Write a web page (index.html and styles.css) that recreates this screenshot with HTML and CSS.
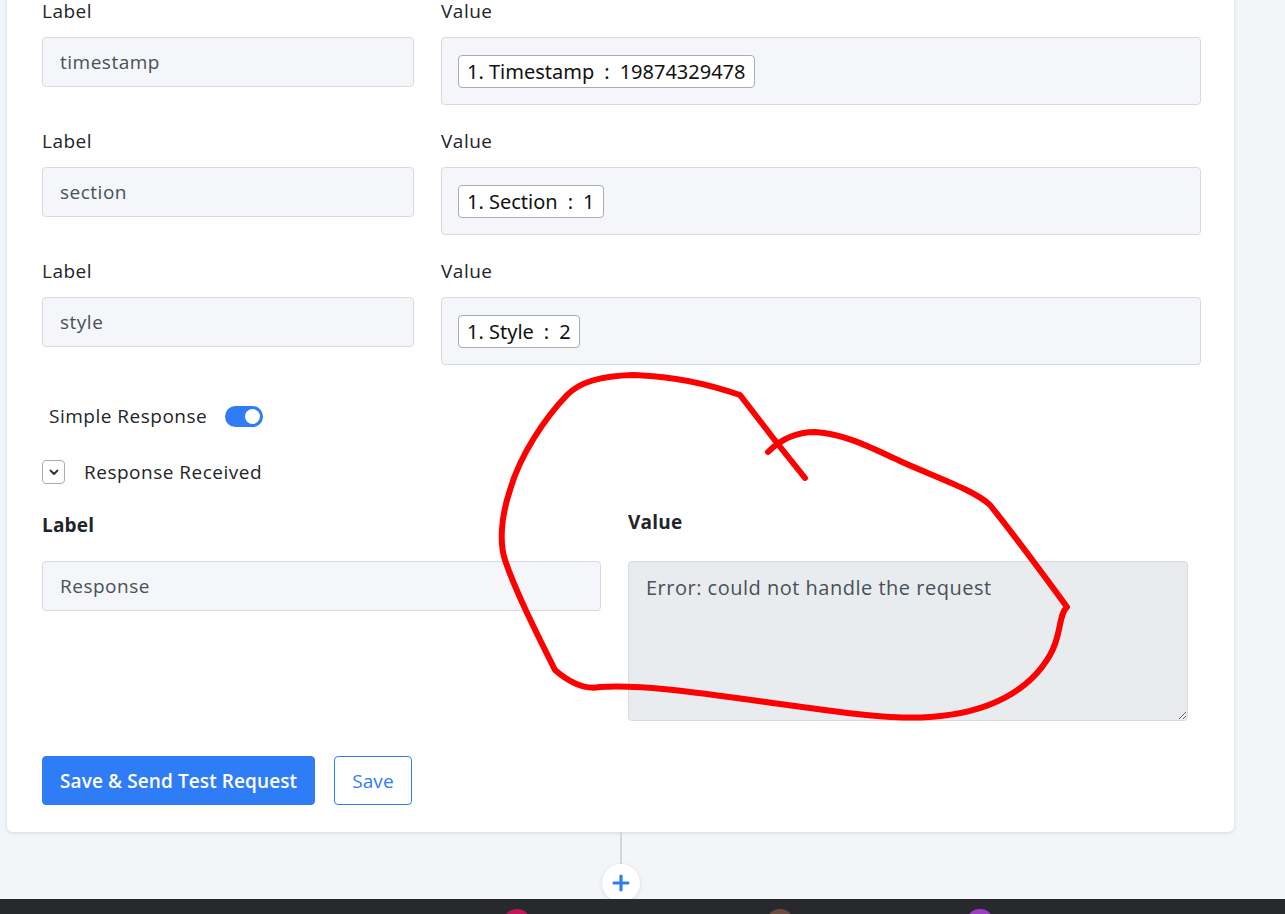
FILE: index.html
```html
<!DOCTYPE html>
<html lang="en">
<head>
  <meta charset="UTF-8">
  <meta name="viewport" content="width=device-width, initial-scale=1.0">
  <title>Webhook Step</title>
  <link rel="stylesheet" href="styles.css">
</head>
<body>
  <div class="step-card">
    <div class="field-row">
      <div class="field">
        <label class="field-label">Label</label>
        <input class="text-input" type="text" value="timestamp" readonly>
      </div>
      <div class="field">
        <label class="field-label">Value</label>
        <div class="chip-box"><span class="chip">1. Timestamp<span class="sep">:</span>19874329478</span></div>
      </div>
    </div>
    <div class="field-row">
      <div class="field">
        <label class="field-label">Label</label>
        <input class="text-input" type="text" value="section" readonly>
      </div>
      <div class="field">
        <label class="field-label">Value</label>
        <div class="chip-box"><span class="chip">1. Section<span class="sep">:</span>1</span></div>
      </div>
    </div>
    <div class="field-row">
      <div class="field">
        <label class="field-label">Label</label>
        <input class="text-input" type="text" value="style" readonly>
      </div>
      <div class="field">
        <label class="field-label">Value</label>
        <div class="chip-box"><span class="chip">1. Style<span class="sep">:</span>2</span></div>
      </div>
    </div>

    <div class="toggle-row">
      <span>Simple Response</span>
      <span class="toggle on"><span class="toggle-knob"></span></span>
    </div>

    <div class="collapse-row">
      <span class="collapse-btn">
        <svg width="10" height="7" viewBox="0 0 10 7"><path d="M1.5 1.5 L5 5 L8.5 1.5" fill="none" stroke="#2b2f33" stroke-width="1.8" stroke-linecap="round" stroke-linejoin="round"/></svg>
      </span>
      <span>Response Received</span>
    </div>

    <div class="response-grid">
      <div class="field">
        <label class="field-label bold label-response">Label</label>
        <input class="text-input" type="text" value="Response" readonly>
      </div>
      <div class="field">
        <label class="field-label bold value-response">Value</label>
        <textarea class="response-text" readonly>Error: could not handle the request</textarea>
      </div>
    </div>

    <div class="actions">
      <button class="btn btn-primary">Save &amp; Send Test Request</button>
      <button class="btn btn-outline">Save</button>
    </div>
  </div>

  <div class="connector">
    <div class="connector-line"></div>
    <div class="add-step">
      <svg width="20" height="20" viewBox="0 0 20 20"><path d="M10 3 V17 M3 10 H17" stroke="#2f7df6" stroke-width="3.2" stroke-linecap="round"/></svg>
    </div>
  </div>

  <div class="dock">
    <span class="dock-dot pink"></span>
    <span class="dock-dot brown"></span>
    <span class="dock-dot purple"></span>
  </div>

  <!-- hand-drawn marker around the response value -->
  <svg class="scribble" width="1285" height="914" viewBox="0 0 1285 914">
    <path d="M805 478 L777 443 L740 395 C720 388 680 376 633 375 C600 376 580 382 567 395 C545 418 520 455 510 490 C500 520 500 545 505 560 C515 590 535 630 555 670 C570 683 585 690 600 687 C640 684 700 693 780 704 C840 712 890 720 930 717 C990 713 1030 690 1050 655 C1062 635 1058 615 1067 607 C1040 570 1010 530 990 505 C975 490 930 475 900 461 C870 447 845 434 815 432 C795 432 780 440 768 452" fill="none" stroke="#ff0000" stroke-width="6" stroke-linecap="round" stroke-linejoin="round"/>
  </svg>
</body>
</html>
```

FILE: styles.css
```css
html, body {
  margin: 0;
  padding: 0;
  background: #f3f6f9;
  font-family: 'Open Sans', 'Noto Sans', sans-serif;
  color: #212529;
  overflow: hidden;
}
.step-card {
  width: 1227px;
  box-sizing: border-box;
  margin: -20px 0 0 7px;
  padding: 20px 33px 27px 35px;
  background: #fff;
  border-radius: 6px;
  box-shadow: 0 1px 4px rgba(0,0,0,0.12);
}
.field-row {
  display: grid;
  grid-template-columns: 372px 1fr;
  column-gap: 27px;
  margin-bottom: 25px;
}
.field {
  display: flex;
  flex-direction: column;
}
.field-label {
  font-size: 19px;
  letter-spacing: 0.5px;
  line-height: 22px;
  margin-bottom: 15px;
  color: #212529;
}
.field-label.bold {
  font-weight: 700;
  letter-spacing: 0.2px;
}
.text-input {
  height: 50px;
  box-sizing: border-box;
  padding: 0 17px;
  border: 1px solid #d6dadf;
  border-radius: 4px;
  background: #f4f6f9;
  font-family: inherit;
  font-size: 19px;
  letter-spacing: 0.5px;
  color: #495057;
  outline: none;
}
.chip-box {
  height: 68px;
  box-sizing: border-box;
  padding: 17px 16px;
  border: 1px solid #d6dadf;
  border-radius: 4px;
  background: #f4f6f9;
  display: flex;
  align-items: flex-start;
}
.chip {
  height: 33px;
  box-sizing: border-box;
  padding: 0 8px;
  display: inline-flex;
  align-items: center;
  white-space: pre;
  background: #fff;
  border: 1px solid #a9adb2;
  border-radius: 4px;
  font-family: 'Noto Sans', sans-serif;
  font-size: 20px;
  color: #111;
}
.chip .sep {
  margin: 0 10px;
}
.toggle-row {
  display: flex;
  align-items: center;
  gap: 18px;
  margin: 40px 0 0 7px;
  height: 22px;
  font-size: 19px;
  letter-spacing: 0.5px;
}
.toggle {
  width: 38px;
  height: 21px;
  border-radius: 11px;
  background: #2f7df6;
  display: flex;
  align-items: center;
  justify-content: flex-end;
  padding: 0 3px;
  box-sizing: border-box;
}
.toggle-knob {
  width: 15px;
  height: 15px;
  border-radius: 50%;
  background: #fff;
}
.collapse-row {
  display: flex;
  align-items: center;
  gap: 19px;
  margin-top: 32px;
  font-size: 19px;
  letter-spacing: 0.5px;
}
.collapse-btn {
  width: 23px;
  height: 24px;
  box-sizing: border-box;
  border: 1px solid #a9adb2;
  border-radius: 4px;
  display: flex;
  align-items: center;
  justify-content: center;
}
.response-grid {
  display: grid;
  grid-template-columns: 559px 560px;
  column-gap: 27px;
  margin-top: 29px;
}
.label-response {
  margin-bottom: 25px;
}
.value-response {
  margin-top: -3px;
  margin-bottom: 28px;
}
.response-text {
  height: 160px;
  box-sizing: border-box;
  padding: 12px 17px;
  border: 1px solid #d6dadf;
  border-radius: 4px;
  background: #e9ecef;
  font-family: inherit;
  font-size: 20px;
  letter-spacing: 0.5px;
  line-height: 28px;
  color: #495057;
  outline: none;
}
.actions {
  display: flex;
  gap: 19px;
  margin-top: 35px;
}
.btn {
  height: 49px;
  padding: 0 17px;
  border-radius: 4px;
  font-family: inherit;
  font-size: 19px;
  letter-spacing: 0.1px;
  cursor: pointer;
}
.btn-primary {
  background: #2f7df6;
  border: 1px solid #2f7df6;
  color: #fff;
  font-weight: 600;
}
.btn-outline {
  background: #fff;
  border: 1px solid #2f7df6;
  color: #2f7df6;
}
.connector {
  display: flex;
  flex-direction: column;
  align-items: center;
  width: 1227px;
  margin-left: 7px;
}
.connector-line {
  width: 2px;
  height: 32px;
  border-left: 1px solid #d3d7dc;
  border-right: 1px solid #d3d7dc;
  box-sizing: border-box;
}
.add-step {
  width: 38px;
  height: 38px;
  border-radius: 50%;
  background: #fff;
  box-shadow: 0 1px 4px rgba(0,0,0,0.12);
  display: flex;
  align-items: center;
  justify-content: center;
}
.dock {
  position: fixed;
  left: 0;
  right: 0;
  bottom: 0;
  height: 15px;
  background: #27292c;
  overflow: hidden;
}
.dock-dot {
  position: absolute;
  top: 10px;
  width: 28px;
  height: 28px;
  border-radius: 50%;
}
.dock-dot.pink { left: 503px; background: #c2185b; }
.dock-dot.brown { left: 766px; background: #6d4c41; }
.dock-dot.purple { left: 966px; background: #9c3fc4; }
.scribble {
  position: fixed;
  left: 0;
  top: 0;
  pointer-events: none;
}
```
